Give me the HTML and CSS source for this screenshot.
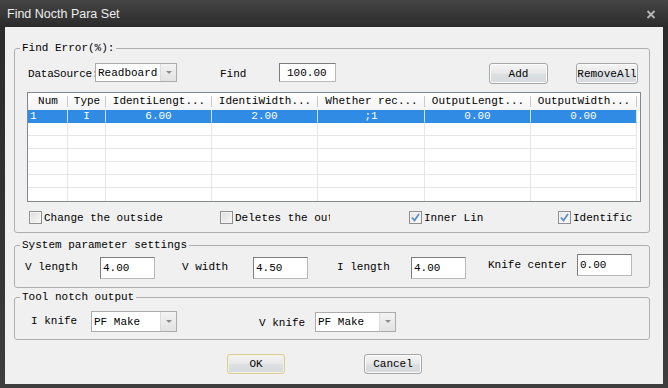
FILE: index.html
```html
<!DOCTYPE html>
<html lang="en">
<head>
    <meta charset="UTF-8">
    <title>Find Nocth Para Set</title>
    <link rel="stylesheet" href="styles.css">
</head>
<body>
    <div class="window">
        <div class="titlebar">
            <span class="title">Find Nocth Para Set</span>
            <svg class="close" width="10" height="9" viewBox="0 0 10 9">
                <path d="M1.5 1 L8.5 8 M8.5 1 L1.5 8" stroke="#b4b4b4" stroke-width="1.9"/>
            </svg>
        </div>
        <div class="client">
            <fieldset class="group group-find">
                <legend>Find Error(%):</legend>
                <div class="find-row">
                    <span class="lbl lbl-source">DataSource:</span>
                    <div class="combo combo-source">
                        <span class="combo-text">Readboard</span>
                        <span class="combo-arrow"></span>
                    </div>
                    <span class="lbl lbl-find">Find</span>
                    <div class="field field-find">100.00</div>
                    <button class="btn btn-add">Add</button>
                    <button class="btn btn-remove">RemoveAll</button>
                </div>
                <div class="grid">
                    <div class="grid-head">
                        <span>Num</span>
                        <span>Type</span>
                        <span>IdentiLengt...</span>
                        <span>IdentiWidth...</span>
                        <span>Whether rec...</span>
                        <span>OutputLengt...</span>
                        <span>OutputWidth...</span>
                    </div>
                    <div class="grid-row selected">
                        <span class="cell-num">1</span>
                        <span>I</span>
                        <span>6.00</span>
                        <span>2.00</span>
                        <span>;1</span>
                        <span>0.00</span>
                        <span>0.00</span>
                    </div>
                    <div class="grid-row"><span></span><span></span><span></span><span></span><span></span><span></span><span></span></div>
                    <div class="grid-row"><span></span><span></span><span></span><span></span><span></span><span></span><span></span></div>
                    <div class="grid-row"><span></span><span></span><span></span><span></span><span></span><span></span><span></span></div>
                    <div class="grid-row"><span></span><span></span><span></span><span></span><span></span><span></span><span></span></div>
                    <div class="grid-row"><span></span><span></span><span></span><span></span><span></span><span></span><span></span></div>
                    <div class="grid-row last"><span></span><span></span><span></span><span></span><span></span><span></span><span></span></div>
                </div>
                <div class="check-row">
                    <label class="check check-change"><span class="box"></span><span class="check-text">Change the outside</span></label>
                    <label class="check check-delete"><span class="box"></span><span class="check-text">Deletes the outside</span></label>
                    <label class="check check-inner"><span class="box checked"><svg width="9" height="9" viewBox="0 0 9 9"><path d="M1 4.5 L3.5 7.5 L8 1" fill="none" stroke="#5b8fc7" stroke-width="1.8"/></svg></span><span class="check-text">Inner Lin</span></label>
                    <label class="check check-ident"><span class="box checked"><svg width="9" height="9" viewBox="0 0 9 9"><path d="M1 4.5 L3.5 7.5 L8 1" fill="none" stroke="#5b8fc7" stroke-width="1.8"/></svg></span><span class="check-text">Identific</span></label>
                </div>
            </fieldset>

            <fieldset class="group group-system">
                <legend>System parameter settings</legend>
                <div class="param-row">
                    <span class="lbl lbl-vlen">V length</span>
                    <div class="field field-param">4.00</div>
                    <span class="lbl lbl-vwid">V width</span>
                    <div class="field field-param">4.50</div>
                    <span class="lbl lbl-ilen">I length</span>
                    <div class="field field-param">4.00</div>
                    <span class="lbl lbl-knife">Knife center</span>
                    <div class="field field-param field-knife">0.00</div>
                </div>
            </fieldset>

            <fieldset class="group group-tool">
                <legend>Tool notch output</legend>
                <div class="tool-row">
                    <span class="lbl lbl-iknife">I knife</span>
                    <div class="combo combo-iknife">
                        <span class="combo-text">PF Make</span>
                        <span class="combo-arrow"></span>
                    </div>
                    <span class="lbl lbl-vknife">V knife</span>
                    <div class="combo combo-vknife">
                        <span class="combo-text">PF Make</span>
                        <span class="combo-arrow"></span>
                    </div>
                </div>
            </fieldset>

            <div class="actions">
                <button class="btn btn-ok">OK</button>
                <button class="btn btn-cancel">Cancel</button>
            </div>
        </div>
    </div>
</body>
</html>
```

FILE: styles.css
```css
body {
    margin: 0;
    padding: 0;
    background-color: #2e2e2e;
}

.window {
    width: 668px;
    height: 388px;
    box-sizing: border-box;
    padding: 0 5px 4px 5px;
    display: flex;
    flex-direction: column;
    background: linear-gradient(#454545, #2b2b2b 27px, #333 60%, #3e3e3e);
}

.titlebar {
    height: 27px;
    display: flex;
    align-items: center;
    justify-content: space-between;
    padding: 0 7px 0 2px;
}

.title {
    font-family: "Liberation Sans", Arial, sans-serif;
    font-size: 12.5px;
    color: #ededed;
    margin-top: 1px;
}

.close {
    margin-top: 1px;
}

.client {
    flex: 1;
    background-color: #f0f0f0;
    padding: 14px 0 0 9px;
    font-family: "Liberation Mono", "DejaVu Sans Mono", monospace;
    font-size: 11px;
    color: #000;
}

.group {
    box-sizing: border-box;
    width: 636px;
    margin: 0;
    padding: 0;
    min-width: 0;
    border: 1px solid #aeaeae;
    border-radius: 3px;
}

.group legend {
    margin-left: 5px;
    padding: 0 2px;
    line-height: 14px;
}

.group-find {
    height: 192px;
}

.group-system {
    height: 50px;
    margin-top: 5px;
}

.group-tool {
    height: 50px;
    margin-top: 2px;
}

.lbl {
    white-space: nowrap;
}

/* find row */
.find-row {
    display: flex;
    align-items: center;
    height: 21px;
    margin-top: 8px;
    padding-left: 13px;
}

.lbl-source {
    width: 67px;
    letter-spacing: -0.2px;
}

.lbl-find {
    width: 59px;
    margin-left: 43px;
}

.combo {
    box-sizing: border-box;
    display: flex;
    background-color: #fff;
    border: 1px solid #acacac;
}

.combo-text {
    flex: 1;
    padding-left: 2px;
    white-space: nowrap;
    overflow: hidden;
    display: flex;
    align-items: center;
}

.combo-arrow {
    width: 15px;
    border-left: 1px solid #dadada;
    background: linear-gradient(#f3f3f3, #e2e2e2);
    display: flex;
    align-items: center;
    justify-content: center;
}

.combo-arrow::before {
    content: "";
    border-left: 3px solid transparent;
    border-right: 3px solid transparent;
    border-top: 3px solid #8c8c8c;
}

.combo-source {
    width: 82px;
    height: 19px;
    margin-top: -2px;
}

.field {
    box-sizing: border-box;
    background-color: #fff;
    border: 1px solid #7e7e7e;
    border-right-color: #b9b9b9;
    border-bottom-color: #b9b9b9;
    display: flex;
    align-items: center;
    padding-left: 2px;
}

.field-find {
    width: 57px;
    height: 19px;
    margin-top: -2px;
    padding-left: 7px;
}

.btn {
    box-sizing: border-box;
    font-family: "Liberation Mono", "DejaVu Sans Mono", monospace;
    font-size: 11px;
    color: #000;
    padding: 0;
    border: 1px solid #a7a7a7;
    border-radius: 3px;
    background: linear-gradient(#f5f5f5, #e9e9e9 45%, #dcdfe2 55%, #d6d9dd);
    box-shadow: inset 0 0 0 1px #fbfbfb;
}

.btn-add {
    width: 59px;
    height: 21px;
    margin-left: 153px;
}

.btn-remove {
    width: 62px;
    height: 21px;
    margin-left: 28px;
}

/* data grid */
.grid {
    width: 614px;
    height: 110px;
    box-sizing: border-box;
    margin: 8px 0 0 12px;
    border: 1px solid #828790;
    background-color: #fff;
}

.grid-head,
.grid-row {
    display: grid;
    grid-template-columns: 40px 38px 106px 106px 107px 106px 106px;
}

.grid-head {
    height: 17px;
    background: linear-gradient(#fff, #f4f4f4);
}

.grid-head span {
    line-height: 17px;
    text-align: center;
    white-space: nowrap;
    overflow: hidden;
    background: linear-gradient(#c9c9c9, #c9c9c9) right center / 1px 11px no-repeat;
}

.grid-row {
    height: 13px;
}

.grid-row span {
    box-sizing: border-box;
    height: 13px;
    line-height: 12px;
    text-align: center;
    border-right: 1px solid #e6e6e6;
    border-bottom: 1px solid #e6e6e6;
    white-space: nowrap;
    overflow: hidden;
}

.grid-row.last span {
    border-bottom: none;
}

.grid-row.selected span {
    background-color: #2f8be3;
    color: #fff;
    border-right-color: #cfe4f8;
    border-bottom-color: #2f8be3;
}

.grid-row .cell-num {
    text-align: left;
    padding-left: 2px;
}

/* checkboxes */
.check-row {
    display: flex;
    height: 13px;
    margin-top: 9px;
    padding-left: 14px;
}

.check {
    display: flex;
    align-items: center;
    gap: 2px;
    white-space: nowrap;
}

.box {
    box-sizing: border-box;
    width: 13px;
    height: 13px;
    border: 1px solid #8f8f8f;
    background: linear-gradient(135deg, #dcdcdc, #fafafa);
    box-shadow: inset 0 0 0 1px #f4f4f4;
    display: flex;
    align-items: center;
    justify-content: center;
}

.box.checked {
    background: linear-gradient(135deg, #e4e4e4, #fff);
}

.check-change {
    width: 191px;
}

.check-delete {
    width: 189px;
}

.check-delete .check-text {
    width: 95px;
    overflow: hidden;
}

.check-inner {
    width: 149px;
}

/* system parameters */
.param-row {
    display: flex;
    align-items: center;
    height: 24px;
    margin-top: 3px;
    padding-left: 10px;
}

.field-param {
    width: 55px;
    height: 22px;
    margin-top: 2px;
}

.field-knife {
    margin-top: -4px;
}

.lbl-vlen {
    width: 75px;
}

.lbl-vwid {
    width: 71px;
    margin-left: 27px;
}

.lbl-ilen {
    width: 74px;
    margin-left: 29px;
}

.lbl-knife {
    width: 89px;
    margin-left: 22px;
    margin-top: -5px;
}

/* tool notch */
.tool-row {
    display: flex;
    align-items: center;
    height: 21px;
    margin-top: 7px;
    padding-left: 16px;
}

.lbl-iknife {
    width: 60px;
    margin-top: -1px;
}

.lbl-vknife {
    width: 56px;
    margin-left: 82px;
    margin-top: 2px;
}

.combo-iknife {
    width: 86px;
    height: 21px;
}

.combo-vknife {
    width: 81px;
    height: 20px;
}

/* dialog buttons */
.actions {
    display: flex;
    gap: 79px;
    margin-top: 14px;
    padding-left: 213px;
}

.btn-ok,
.btn-cancel {
    width: 58px;
    height: 20px;
}

.btn-ok {
    border-color: #d9cc98;
    box-shadow: inset 0 0 0 1px #f7f2dc;
}
```
